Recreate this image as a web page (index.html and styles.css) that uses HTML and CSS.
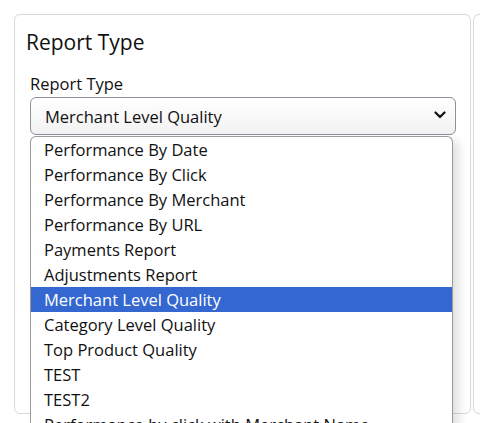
FILE: index.html
```html
<!DOCTYPE html>
<html>
<head>
<meta charset="utf-8">
<link rel="stylesheet" href="styles.css">
</head>
<body>
<div class="page">
  <div class="card">
    <h2 class="card-title">Report Type</h2>
    <div class="field">
      <label class="label">Report Type</label>
      <div class="select">
        <span class="select-value">Merchant Level Quality</span>
        <svg class="chevron" width="12" height="8" viewBox="0 0 12 8"><path d="M1.5 1.5 L6 6 L10.5 1.5" fill="none" stroke="#111" stroke-width="2.2" stroke-linecap="round" stroke-linejoin="round"/></svg>
      </div>
      <ul class="dropdown">
        <li>Performance By Date</li>
        <li>Performance By Click</li>
        <li>Performance By Merchant</li>
        <li>Performance By URL</li>
        <li>Payments Report</li>
        <li>Adjustments Report</li>
        <li class="selected">Merchant Level Quality</li>
        <li>Category Level Quality</li>
        <li>Top Product Quality</li>
        <li>TEST</li>
        <li>TEST2</li>
        <li>Performance by click with Merchant Name</li>
      </ul>
    </div>
  </div>
  <div class="card card-next"></div>
</div>
</body>
</html>
```
FILE: styles.css
```css
html, body {
  margin: 0;
  padding: 0;
  background: #fff;
  overflow: hidden;
}
body {
  width: 480px;
  height: 423px;
  font-family: "Open Sans", "Noto Sans", sans-serif;
  color: #212529;
}
.page {
  display: flex;
  gap: 2px;
  padding: 14px 0 0 14px;
}
.card {
  box-sizing: border-box;
  width: 457px;
  height: 400px;
  flex: none;
  border: 1px solid #d5d8dc;
  border-radius: 6px;
  padding: 12px 14px 0 11px;
}
.card-next {
  width: 40px;
}
.card-title {
  margin: 0;
  font-size: 21px;
  font-weight: 400;
  line-height: 30px;
  color: #111;
}
.field {
  position: relative;
  margin-top: 16px;
  padding-left: 4px;
}
.label {
  display: block;
  font-size: 16.5px;
  line-height: 22px;
  margin-bottom: 2px;
  color: #111;
}
.select {
  box-sizing: border-box;
  height: 38px;
  border: 1.5px solid #8f8f9d;
  border-radius: 6px;
  background: linear-gradient(#ffffff, #f2f2f2);
  display: flex;
  align-items: center;
  justify-content: space-between;
  padding: 0 9px 0 14px;
}
.select-value {
  font-size: 16.5px;
  color: #111;
}
.chevron {
  display: block;
  margin-top: -2px;
}
.dropdown {
  position: absolute;
  top: 63px;
  left: 4px;
  width: 423px;
  box-sizing: border-box;
  margin: 0;
  padding: 0;
  list-style: none;
  background: #fff;
  border: 1px solid #9a9aa2;
  border-bottom: none;
  border-radius: 6px 6px 0 0;
  box-shadow: 6px 4px 10px rgba(0,0,0,0.12);
}
.dropdown li {
  height: 25px;
  line-height: 25px;
  padding-left: 13px;
  font-size: 16.5px;
  color: #111;
  white-space: nowrap;
}
.dropdown li.selected {
  background: #3467d0;
  color: #fff;
}
```
